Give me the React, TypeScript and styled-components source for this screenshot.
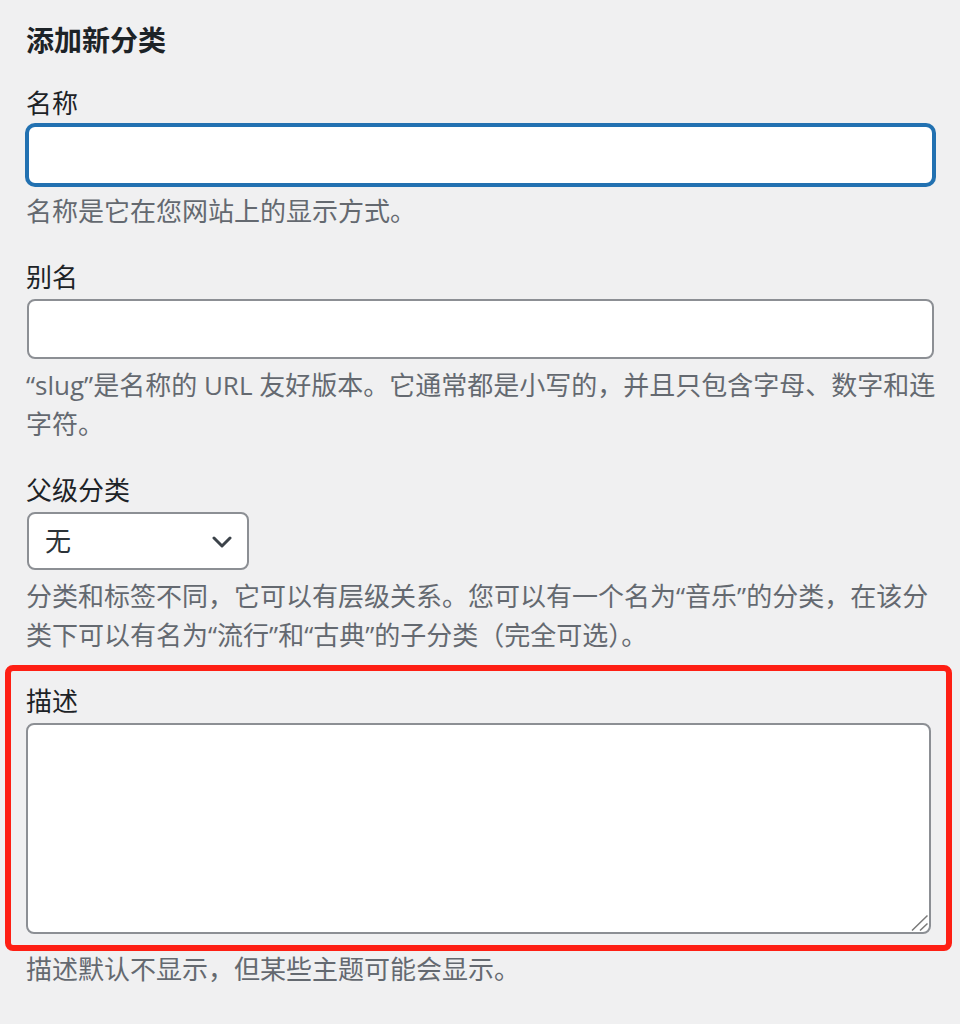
import React from 'react';
import styled, {createGlobalStyle} from 'styled-components';

const GlobalStyle = createGlobalStyle`
  body {
    margin: 0;
    background: #f0f0f1;
    color: #1d2327;
    font-family: "Open Sans", "Noto Sans CJK SC", sans-serif;
  }
`;

const FormWrap = styled.div`
  padding: 19px 10px 40px 26px;
`;

const Heading = styled.h2`
  margin: 0 0 23px;
  font-size: 28px;
  line-height: 42px;
  font-weight: 700;
  color: #1d2327;
`;

const Field = styled.div`
  & + & {
    margin-top: 27px;
  }
`;

const Label = styled.label`
  display: block;
  font-size: 26px;
  line-height: 39px;
  margin-bottom: 2px;
  color: #1d2327;
`;

const TextInput = styled.input<{$focused?: boolean}>`
  display: block;
  box-sizing: border-box;
  width: 907px;
  height: 60px;
  margin: 0 1px;
  padding: 0 16px;
  font: inherit;
  font-size: 26px;
  color: #2c3338;
  background: #fff;
  border: 2px solid ${(p) => (p.$focused ? '#2271b1' : '#8c8f94')};
  border-radius: 8px;
  box-shadow: ${(p) => (p.$focused ? '0 0 0 2px #2271b1' : 'none')};
  outline: none;
`;

const SelectWrap = styled.div`
  position: relative;
  width: 222px;
  margin: 0 1px;
  svg {
    position: absolute;
    right: 17px;
    top: 24px;
    pointer-events: none;
  }
`;

const Select = styled.select`
  display: block;
  box-sizing: border-box;
  width: 222px;
  height: 58px;
  padding: 0 16px;
  font: inherit;
  font-size: 26px;
  color: #2c3338;
  background: #fff;
  border: 2px solid #8c8f94;
  border-radius: 8px;
  appearance: none;
  outline: none;
`;

const HighlightArea = styled.div`
  position: relative;
  width: 909px;
  &::after {
    content: '';
    position: absolute;
    top: -17px;
    left: -21px;
    right: -17px;
    bottom: -17px;
    border: 6px solid #fe1f14;
    border-radius: 8px;
    pointer-events: none;
  }
`;

const TextareaWrap = styled.div`
  position: relative;
  width: 905px;
  svg {
    position: absolute;
    right: 3px;
    bottom: 3px;
    pointer-events: none;
  }
`;

const TextArea = styled.textarea`
  display: block;
  box-sizing: border-box;
  width: 905px;
  height: 211px;
  margin: 0;
  padding: 8px 16px;
  font: inherit;
  font-size: 26px;
  background: #fff;
  border: 2px solid #8c8f94;
  border-radius: 8px;
  resize: none;
  outline: none;
`;

const Description = styled.p<{$top?: number}>`
  margin: ${(p) => p.$top ?? 7}px 0 0;
  font-size: 26px;
  line-height: 39px;
  color: #646970;
`;

const Chevron = () => (
  <svg width="20" height="12" viewBox="0 0 20 12">
    <path d="M2 2 L10 10 L18 2" fill="none" stroke="#3c434a" strokeWidth="3" strokeLinecap="round" strokeLinejoin="round" />
  </svg>
);

const Grip = () => (
  <svg width="17" height="17" viewBox="0 0 17 17">
    <path d="M1 16.5 L16.5 1.5 M9 16.5 L16.5 9.5" stroke="#7a7a7a" strokeWidth="1.5" />
  </svg>
);

const App = () => {
  return (
    <>
      <GlobalStyle />
      <FormWrap>
        <Heading>添加新分类</Heading>
        <Field>
          <Label htmlFor="tag-name">名称</Label>
          <TextInput id="tag-name" type="text" $focused />
          <Description>名称是它在您网站上的显示方式。</Description>
        </Field>
        <Field>
          <Label htmlFor="tag-slug">别名</Label>
          <TextInput id="tag-slug" type="text" />
          <Description>“slug”是名称的 URL 友好版本。它通常都是小写的，并且只包含字母、数字和连字符。</Description>
        </Field>
        <Field>
          <Label htmlFor="parent">父级分类</Label>
          <SelectWrap>
            <Select id="parent" defaultValue="-1">
              <option value="-1">无</option>
            </Select>
            <Chevron />
          </SelectWrap>
          <Description>分类和标签不同，它可以有层级关系。您可以有一个名为“音乐”的分类，在该分类下可以有名为“流行”和“古典”的子分类（完全可选）。</Description>
        </Field>
        <Field>
          <HighlightArea>
            <Label htmlFor="tag-description">描述</Label>
            <TextareaWrap>
              <TextArea id="tag-description" />
              <Grip />
            </TextareaWrap>
          </HighlightArea>
          <Description $top={16}>描述默认不显示，但某些主题可能会显示。</Description>
        </Field>
      </FormWrap>
    </>
  );
};

export default App;
